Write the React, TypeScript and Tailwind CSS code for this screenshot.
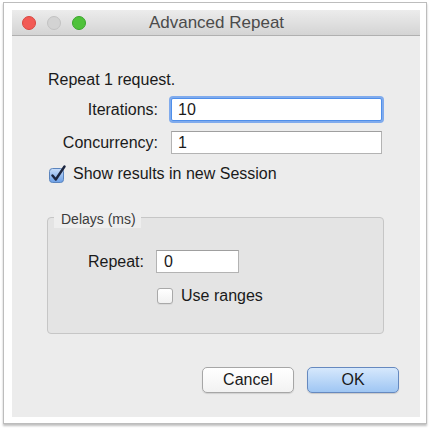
import React from "react"

const font = { fontFamily: '"Liberation Sans", Arial, sans-serif' }

function TrafficLight({ color, border }: { color: string; border: string }) {
  return <div className={`h-[14px] w-[14px] rounded-full border ${color} ${border}`} />
}

function CheckedBox() {
  return (
    <svg width="17" height="18" viewBox="0 0 17 18" className="shrink-0">
      <defs>
        <linearGradient id="cb" x1="0" y1="0" x2="0" y2="1">
          <stop offset="0" stopColor="#c9defa" />
          <stop offset="1" stopColor="#6b9fe6" />
        </linearGradient>
      </defs>
      <rect x="0.5" y="3.5" width="14" height="14" rx="3" fill="url(#cb)" stroke="#5b84bd" />
      <path d="M3.5 10.5 L6.8 14.5 L15.5 1.5" fill="none" stroke="#1c2640" strokeWidth="2.4" strokeLinecap="round" strokeLinejoin="round" />
    </svg>
  )
}

export default function App() {
  return (
    <div className="w-[433px] h-[431px] bg-white pl-[3px] pt-[2px]" style={font}>
      <div className="w-[424px] h-[422px] border border-[#bdbdbd] bg-white pl-[8px] pt-[7px] shadow-[0_2px_2px_rgba(0,0,0,0.25)]">
        <div className="w-[408px] h-[407px] flex flex-col bg-[#ececec]">
          {/* Title bar */}
          <div className="relative h-[26px] shrink-0 flex items-center pl-[10px] gap-[11px] bg-gradient-to-b from-[#ececec] to-[#d4d4d4] border-b border-[#b0b0b0]">
            <TrafficLight color="bg-[#f25a55]" border="border-[#d9463f]" />
            <TrafficLight color="bg-[#d3d3d3]" border="border-[#c2c2c2]" />
            <TrafficLight color="bg-[#4fc23a]" border="border-[#3aa52c]" />
            <div className="absolute inset-0 flex items-center justify-center text-[17px] text-[#4b4b4b] pl-[1px]">
              Advanced Repeat
            </div>
          </div>

          {/* Body */}
          <div className="flex flex-col pl-[36px] pt-[35px] text-[16px] leading-[18px] text-[#1a1a1a]">
            <div>Repeat 1 request.</div>

            <div className="flex items-center mt-[9px] h-[23px]">
              <div className="w-[110px] text-right">Iterations:</div>
              <div className="ml-[13px] w-[211px] h-[23px] bg-white border border-[#4f8fea] rounded-[2px] shadow-[0_0_0_2px_rgba(92,150,238,0.75)] pl-[6px] flex items-center">
                10
              </div>
            </div>

            <div className="flex items-center mt-[10px] h-[23px]">
              <div className="w-[110px] text-right">Concurrency:</div>
              <div className="ml-[13px] w-[211px] h-[23px] bg-white border border-[#b3b3b3] border-t-[#9f9f9f] pl-[6px] flex items-center">
                1
              </div>
            </div>

            <div className="flex items-end mt-[10px] h-[19px] pl-[1px] gap-[7px]">
              <CheckedBox />
              <div className="leading-[18px]">Show results in new Session</div>
            </div>

            {/* Group box */}
            <div className="relative mt-[34px] -ml-[1px] w-[337px] h-[117px] rounded-[4px] border border-[#c6c6c6] bg-[#e4e4e4]">
              <div className="absolute left-[6px] -top-[8px] w-[87px] h-[18px] bg-[#eeeeee] text-[14px] leading-[18px] text-[#3c3c3c] pl-[7px]">
                Delays (ms)
              </div>
              <div className="flex items-center mt-[32px] h-[23px]">
                <div className="w-[96px] text-right">Repeat:</div>
                <div className="ml-[12px] w-[83px] h-[23px] bg-white border border-[#b3b3b3] border-t-[#9f9f9f] pl-[7px] flex items-center">
                  0
                </div>
              </div>
              <div className="flex items-center mt-[14px] ml-[109px] gap-[8px]">
                <div className="w-[16px] h-[16px] rounded-[3px] border border-[#a9a9a9] bg-gradient-to-b from-white to-[#f1f1f1] shadow-[0_1px_0_rgba(0,0,0,0.05)]" />
                <div>Use ranges</div>
              </div>
            </div>

            {/* Buttons */}
            <div className="flex mt-[33px] ml-[154px] gap-[13px]">
              <div className="w-[92px] h-[26px] rounded-[5px] border border-[#a6a6a6] bg-gradient-to-b from-white to-[#f2f2f2] flex items-center justify-center shadow-[0_1px_1px_rgba(0,0,0,0.12)]">
                Cancel
              </div>
              <div className="w-[92px] h-[26px] rounded-[5px] border border-[#6689bf] bg-gradient-to-b from-[#d6e8fc] to-[#9fc6f3] flex items-center justify-center shadow-[0_1px_1px_rgba(0,0,0,0.15)]">
                OK
              </div>
            </div>
          </div>
        </div>
      </div>
    </div>
  )
}
